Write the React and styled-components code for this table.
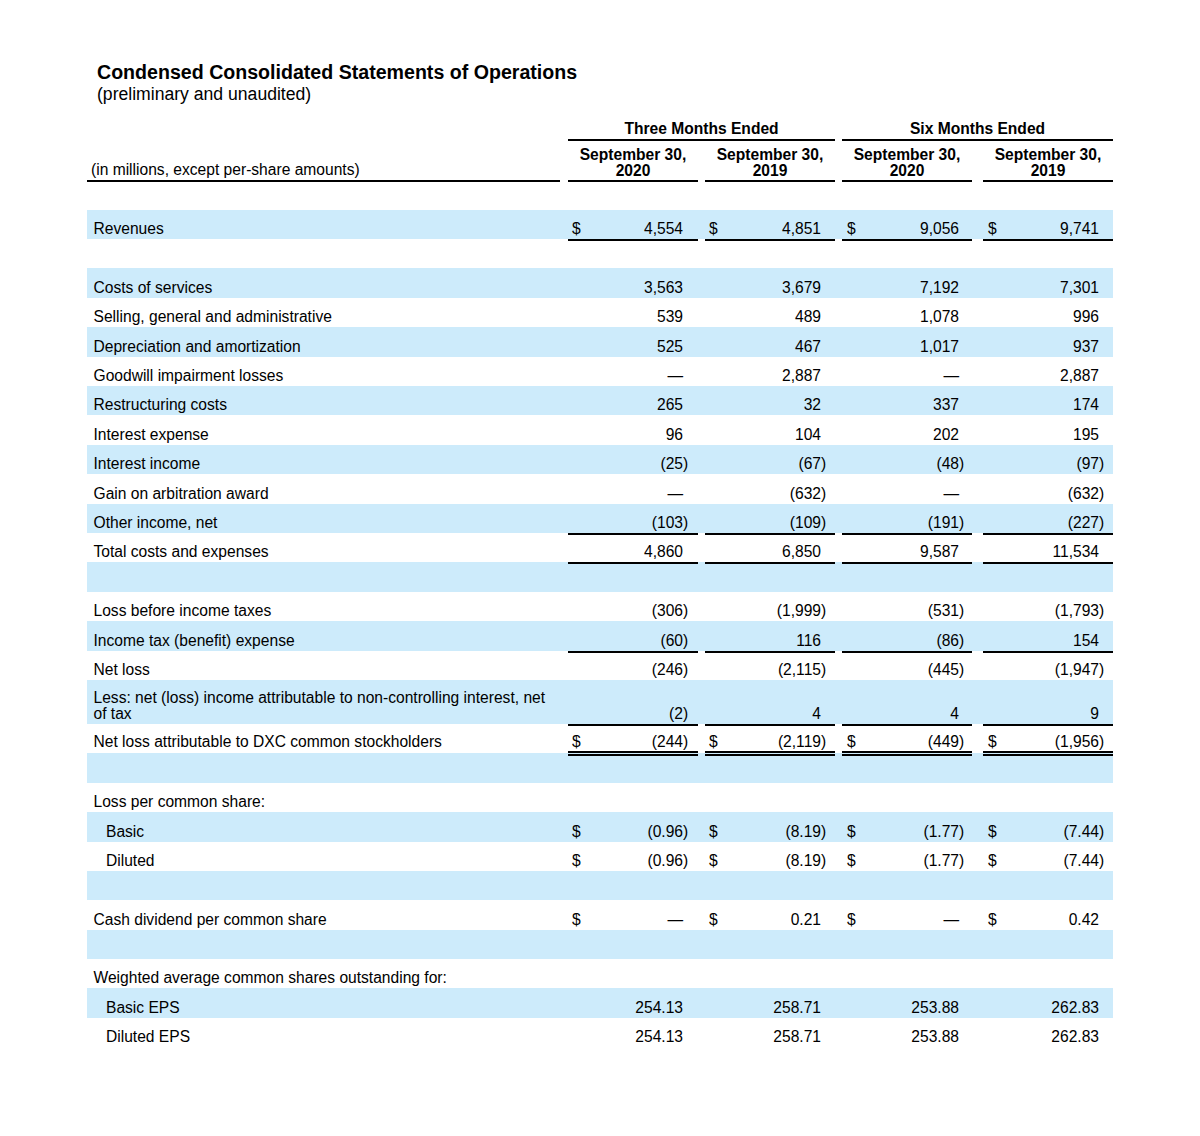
import React from "react";
import styled, { createGlobalStyle } from "styled-components";

const GlobalStyle = createGlobalStyle`
  html, body {
    margin: 0;
    padding: 0;
    background: #ffffff;
  }
  body {
    font-family: "Liberation Sans", Arial, sans-serif;
    color: #000;
  }
`;

// label | gap | col | gap | col | gap | col | gap | col
const COLS = "473px 8px 130px 7px 130px 7px 130px 11px 130px";
const VALUE_COLUMNS = [
  { col: 3, pl: 4, pr: 15 },
  { col: 5, pl: 4, pr: 14 },
  { col: 7, pl: 5, pr: 13 },
  { col: 9, pl: 5, pr: 14 },
];

const SHADE = "#cdebfb";
const RULE = "linear-gradient(#000, #000)";

const Page = styled.div`
  width: 1026px;
  padding: 60.5px 0 80px 87px;
  font-size: 15.6px;
`;

const Title = styled.div`
  margin-left: 10px;
  font-size: 19.6px;
  font-weight: 700;
  line-height: 22px;
`;

const Subtitle = styled.div`
  margin: 1px 0 0 10px;
  font-size: 17.6px;
  line-height: 20px;
`;

const HeadGrid = styled.div`
  display: grid;
  grid-template-columns: ${COLS};
  row-gap: 5px;
  margin-top: 17.7px;
  font-size: 15.6px;
  line-height: 16px;
`;

const PeriodHead = styled.div`
  grid-row: 1;
  grid-column: ${(p) => p.$span};
  text-align: center;
  font-weight: 700;
  padding-bottom: 2px;
  border-bottom: 2px solid #000;
`;

const UnitsHead = styled.div`
  grid-row: 2;
  grid-column: 1;
  display: flex;
  align-items: flex-end;
  padding: 0 0 2px 4px;
  border-bottom: 2px solid #000;
`;

const DateHead = styled.div`
  grid-row: 2;
  grid-column: ${(p) => p.$col};
  text-align: center;
  font-weight: 700;
  padding: 1px 0 2px;
  line-height: 15.5px;
  border-bottom: 2px solid #000;
`;

const Body = styled.div`
  margin-top: 27.5px;
`;

const Row = styled.div`
  display: grid;
  grid-template-columns: ${COLS};
  height: ${(p) => (p.$tall ? "44px" : "29.4px")};
  background: ${(p) => (p.$shade ? SHADE : "#ffffff")};
  line-height: 16px;
`;

const LabelCell = styled.div`
  grid-column: 1;
  display: flex;
  align-items: flex-end;
  padding: 0 10px ${(p) => (p.$lift ? "3px" : "2px")} ${(p) => (p.$indent ? "19px" : "6.5px")};
`;

const ruleBackground = (rule) => {
  if (rule === "single") return `${RULE} left bottom / 100% 2px no-repeat`;
  if (rule === "double")
    return `${RULE} left bottom / 100% 2px no-repeat, ${RULE} left 0 bottom 3px / 100% 2px no-repeat`;
  return "none";
};

// how far the rule hangs below the row, and the room the text keeps above it
const ruleDrop = (rule) => (rule === "double" ? 3 : rule === "single" ? 2 : 0);
const ruleRoom = (rule) => (rule === "double" ? 3 : 2);

const ValueCell = styled.div`
  grid-column: ${(p) => p.$col};
  display: flex;
  align-items: flex-end;
  justify-content: ${(p) => (p.$dollar ? "space-between" : "flex-end")};
  padding: 0 ${(p) => p.$pr}px ${(p) => ruleRoom(p.$rule) + ruleDrop(p.$rule)}px ${(p) => p.$pl}px;
  margin-bottom: -${(p) => ruleDrop(p.$rule)}px;
  background: ${(p) => ruleBackground(p.$rule)};
  white-space: nowrap;
`;

const Hang = styled.span`
  margin-right: -5.2px;
`;

const ROWS = [
  { label: "Revenues", dollar: true, rule: "single", v: ["4,554", "4,851", "9,056", "9,741"] },
  { blank: true },
  { label: "Costs of services", v: ["3,563", "3,679", "7,192", "7,301"] },
  { label: "Selling, general and administrative", v: ["539", "489", "1,078", "996"] },
  { label: "Depreciation and amortization", v: ["525", "467", "1,017", "937"] },
  { label: "Goodwill impairment losses", v: ["—", "2,887", "—", "2,887"] },
  { label: "Restructuring costs", v: ["265", "32", "337", "174"] },
  { label: "Interest expense", v: ["96", "104", "202", "195"] },
  { label: "Interest income", v: ["(25)", "(67)", "(48)", "(97)"] },
  { label: "Gain on arbitration award", v: ["—", "(632)", "—", "(632)"] },
  { label: "Other income, net", rule: "single", v: ["(103)", "(109)", "(191)", "(227)"] },
  { label: "Total costs and expenses", rule: "single", v: ["4,860", "6,850", "9,587", "11,534"] },
  { blank: true },
  { label: "Loss before income taxes", v: ["(306)", "(1,999)", "(531)", "(1,793)"] },
  { label: "Income tax (benefit) expense", rule: "single", v: ["(60)", "116", "(86)", "154"] },
  { label: "Net loss", v: ["(246)", "(2,115)", "(445)", "(1,947)"] },
  {
    label: ["Less: net (loss) income attributable to non-controlling interest, net", "of tax"],
    tall: true,
    rule: "single",
    v: ["(2)", "4", "4", "9"],
  },
  {
    label: "Net loss attributable to DXC common stockholders",
    dollar: true,
    rule: "double",
    v: ["(244)", "(2,119)", "(449)", "(1,956)"],
  },
  { blank: true },
  { label: "Loss per common share:" },
  { label: "Basic", indent: true, dollar: true, v: ["(0.96)", "(8.19)", "(1.77)", "(7.44)"] },
  { label: "Diluted", indent: true, dollar: true, v: ["(0.96)", "(8.19)", "(1.77)", "(7.44)"] },
  { blank: true },
  { label: "Cash dividend per common share", dollar: true, v: ["—", "0.21", "—", "0.42"] },
  { blank: true },
  { label: "Weighted average common shares outstanding for:" },
  { label: "Basic EPS", indent: true, v: ["254.13", "258.71", "253.88", "262.83"] },
  { label: "Diluted EPS", indent: true, v: ["254.13", "258.71", "253.88", "262.83"] },
];

function Amount({ value }) {
  if (value.endsWith(")")) {
    return (
      <span>
        {value.slice(0, -1)}
        <Hang>)</Hang>
      </span>
    );
  }
  return <span>{value}</span>;
}

function StatementRow({ row, shade }) {
  const label = Array.isArray(row.label) ? (
    <span>
      {row.label[0]}
      <br />
      {row.label[1]}
    </span>
  ) : (
    row.label
  );

  return (
    <Row $shade={shade} $tall={row.tall}>
      {!row.blank && (
        <LabelCell $indent={row.indent} $lift={row.rule === "double"}>
          {label}
        </LabelCell>
      )}
      {row.v &&
        row.v.map((value, i) => {
          const c = VALUE_COLUMNS[i];
          return (
            <ValueCell
              key={i}
              $col={c.col}
              $pl={c.pl}
              $pr={c.pr}
              $dollar={row.dollar}
              $rule={row.rule}
            >
              {row.dollar && <span>$</span>}
              <Amount value={value} />
            </ValueCell>
          );
        })}
    </Row>
  );
}

export default function App() {
  return (
    <>
      <GlobalStyle />
      <Page>
        <Title>Condensed Consolidated Statements of Operations</Title>
        <Subtitle>(preliminary and unaudited)</Subtitle>

        <HeadGrid>
          <PeriodHead $span="3 / 6">Three Months Ended</PeriodHead>
          <PeriodHead $span="7 / 10">Six Months Ended</PeriodHead>
          <UnitsHead>(in millions, except per-share amounts)</UnitsHead>
          <DateHead $col={3}>
            September 30,
            <br />
            2020
          </DateHead>
          <DateHead $col={5}>
            September 30,
            <br />
            2019
          </DateHead>
          <DateHead $col={7}>
            September 30,
            <br />
            2020
          </DateHead>
          <DateHead $col={9}>
            September 30,
            <br />
            2019
          </DateHead>
        </HeadGrid>

        <Body>
          {ROWS.map((row, i) => (
            <StatementRow key={i} row={row} shade={i % 2 === 0} />
          ))}
        </Body>
      </Page>
    </>
  );
}
